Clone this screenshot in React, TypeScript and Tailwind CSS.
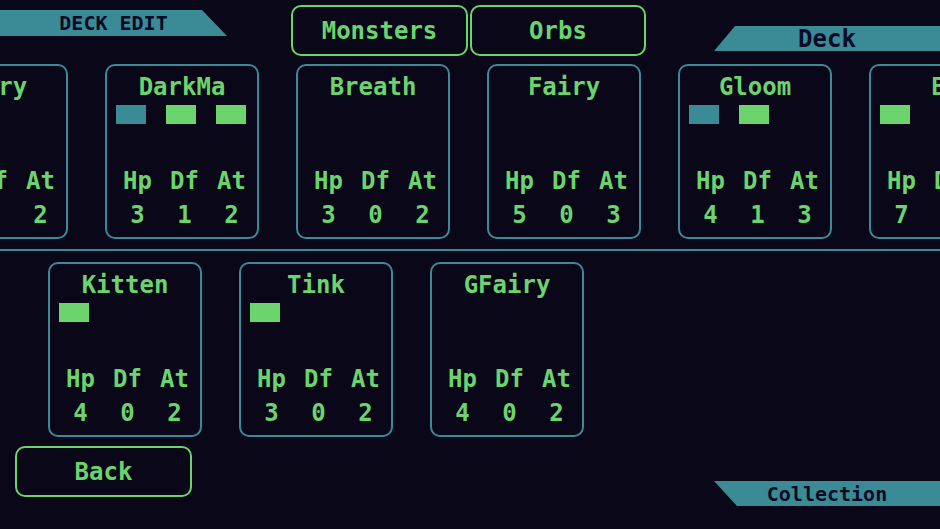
import React from "react";

type Monster = {
  name: string;
  orbs: string[];
  hp: number;
  df: number;
  at: number;
};

const deck: Monster[] = [
  { name: "Fairy", orbs: [], hp: 5, df: 0, at: 2 },
  { name: "DarkMa", orbs: ["teal", "green", "green"], hp: 3, df: 1, at: 2 },
  { name: "Breath", orbs: [], hp: 3, df: 0, at: 2 },
  { name: "Fairy", orbs: [], hp: 5, df: 0, at: 3 },
  { name: "Gloom", orbs: ["teal", "green"], hp: 4, df: 1, at: 3 },
  { name: "Bo", orbs: ["green"], hp: 7, df: 0, at: 2 },
];

const collection: Monster[] = [
  { name: "Kitten", orbs: ["green"], hp: 4, df: 0, at: 2 },
  { name: "Tink", orbs: ["green"], hp: 3, df: 0, at: 2 },
  { name: "GFairy", orbs: [], hp: 4, df: 0, at: 2 },
];

function MonsterCard({ data }: { data: Monster }) {
  return (
    <div className="shrink-0 w-[154px] h-[175px] border-2 border-[#3b8b96] rounded-[10px] flex flex-col text-[#6cd46c]">
      <p className="pt-[7px] h-[35px] text-center text-[24px] leading-[28px]">{data.name}</p>
      <div className="mt-[4px] h-[19px] flex gap-[20px] pl-[9px]">
        {data.orbs.map((o, i) => (
          <span
            key={i}
            className={o === "teal" ? "w-[30px] h-[19px] bg-[#3b8b96]" : "w-[30px] h-[19px] bg-[#6cd46c]"}
          />
        ))}
      </div>
      <div className="mt-[43px] ml-[7px] grid grid-cols-[47px_47px_47px] text-center text-[24px] leading-[28px]">
        <span>Hp</span>
        <span>Df</span>
        <span>At</span>
      </div>
      <div className="mt-[6px] ml-[7px] grid grid-cols-[47px_47px_47px] text-center text-[24px] leading-[28px]">
        <span>{data.hp}</span>
        <span>{data.df}</span>
        <span>{data.at}</span>
      </div>
    </div>
  );
}

export default function App() {
  return (
    <div className="w-[940px] h-[529px] overflow-hidden bg-[#0a0718] font-['DejaVu_Sans_Mono',monospace] font-bold flex flex-col">
      {/* header */}
      <div className="h-[64px] flex items-start shrink-0">
        <div className="mt-[10px] w-[227px] h-[26px] bg-[#3b8b96] [clip-path:polygon(0_0,202px_0,227px_100%,0_100%)] flex items-center justify-center text-[#0a0a26] text-[20px] leading-none">
          DECK EDIT
        </div>
        <div className="mt-[5px] ml-[64px] flex gap-[2px]">
          <button className="w-[177px] h-[51px] border-2 border-[#6cd46c] rounded-[10px] text-[#6cd46c] text-[24px]">Monsters</button>
          <button className="w-[176px] h-[51px] border-2 border-[#6cd46c] rounded-[10px] text-[#6cd46c] text-[24px]">Orbs</button>
        </div>
        <div className="ml-auto mt-[26px] w-[226px] h-[25px] bg-[#3b8b96] [clip-path:polygon(21px_0,100%_0,100%_100%,0_100%)] flex items-center justify-center text-[#0a0a26] text-[24px] leading-none">
          Deck
        </div>
      </div>

      {/* deck row */}
      <div className="flex gap-[37px] ml-[-86px] shrink-0">
        {deck.map((m, i) => (
          <MonsterCard key={i} data={m} />
        ))}
      </div>

      <div className="mt-[10px] h-[2px] bg-[#3b8b96] shrink-0" />

      {/* collection row */}
      <div className="mt-[11px] flex gap-[37px] ml-[48px] shrink-0">
        {collection.map((m, i) => (
          <MonsterCard key={i} data={m} />
        ))}
      </div>

      {/* footer */}
      <div className="mt-[9px] flex items-start">
        <button className="ml-[15px] w-[177px] h-[51px] border-2 border-[#6cd46c] rounded-[10px] text-[#6cd46c] text-[24px]">Back</button>
        <div className="ml-auto mt-[35px] w-[226px] h-[25px] bg-[#3b8b96] [clip-path:polygon(0_0,100%_0,100%_100%,23px_100%)] flex items-center justify-center text-[#0a0a26] text-[20px] leading-none">
          Collection
        </div>
      </div>
    </div>
  );
}
